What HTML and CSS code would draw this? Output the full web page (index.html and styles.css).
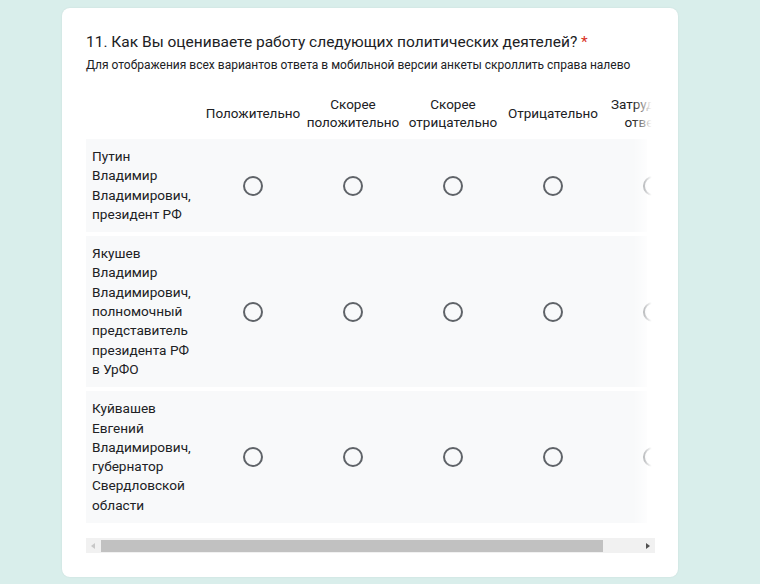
FILE: index.html
```html
<!DOCTYPE html>
<html lang="ru">
<head>
<meta charset="utf-8">
<link rel="stylesheet" href="styles.css">
</head>
<body>
<div class="card">
  <div class="title">11. Как Вы оцениваете работу следующих политических деятелей? <span class="req">*</span></div>
  <div class="subtitle">Для отображения всех вариантов ответа в мобильной версии анкеты скроллить справа налево</div>
  <div class="scroller">
    <div class="grid">
      <div class="row head">
        <div class="cell label"></div>
        <div class="cell">Положительно</div>
        <div class="cell">Скорее<br>положительно</div>
        <div class="cell">Скорее<br>отрицательно</div>
        <div class="cell">Отрицательно</div>
        <div class="cell">Затрудняюсь<br>ответить</div>
      </div>
      <div class="row body">
        <div class="cell label">Путин Владимир Владимирович, президент РФ</div>
        <div class="cell"><span class="radio"></span></div>
        <div class="cell"><span class="radio"></span></div>
        <div class="cell"><span class="radio"></span></div>
        <div class="cell"><span class="radio"></span></div>
        <div class="cell"><span class="radio"></span></div>
      </div>
      <div class="row body">
        <div class="cell label">Якушев Владимир Владимирович, полномочный представитель президента РФ в УрФО</div>
        <div class="cell"><span class="radio"></span></div>
        <div class="cell"><span class="radio"></span></div>
        <div class="cell"><span class="radio"></span></div>
        <div class="cell"><span class="radio"></span></div>
        <div class="cell"><span class="radio"></span></div>
      </div>
      <div class="row body">
        <div class="cell label">Куйвашев Евгений Владимирович, губернатор Свердловской области</div>
        <div class="cell"><span class="radio"></span></div>
        <div class="cell"><span class="radio"></span></div>
        <div class="cell"><span class="radio"></span></div>
        <div class="cell"><span class="radio"></span></div>
        <div class="cell"><span class="radio"></span></div>
      </div>
    </div>
    <div class="fade"></div>
  </div>
  <div class="scrollbar">
    <span class="arrow left"></span>
    <span class="thumb"></span>
    <span class="arrow right"></span>
  </div>
</div>
</body>
</html>
```

FILE: styles.css
```css
html, body {
  margin: 0;
  padding: 0;
}
body {
  background: #d9eeeb;
  font-family: Roboto, "Noto Sans", sans-serif;
  color: #202124;
  width: 760px;
  height: 584px;
  overflow: hidden;
}
.card {
  margin: 8px 0 0 62px;
  width: 616px;
  box-sizing: border-box;
  background: #fff;
  border-radius: 8px;
  padding: 22px 23px 24px 24px;
  box-shadow: 0 0 2px rgba(0,0,0,0.08);
}
.title {
  font-size: 15.5px;
  line-height: 24px;
  color: #202124;
}
.req {
  color: #d93025;
}
.subtitle {
  margin-top: 3px;
  font-size: 12px;
  line-height: 16px;
  color: #202124;
}
.scroller {
  position: relative;
  margin-top: 22px;
  width: 569px;
  overflow: hidden;
}
.grid {
  display: flex;
  flex-direction: column;
  gap: 4px;
  width: max-content;
}
.row {
  display: grid;
  grid-template-columns: 117px repeat(5, 100px);
  align-items: center;
}
.row.head {
  font-size: 13.5px;
  line-height: 18px;
  text-align: center;
  margin-bottom: 4px;
  min-height: 36px;
}
.row.body {
  background: #f8f9fa;
  width: 561px;
  font-size: 13.6px;
  line-height: 19.3px;
}
.cell {
  display: flex;
  justify-content: center;
  align-items: center;
}
.cell.label {
  display: block;
  padding: 8px 8px 8px 6px;
  text-align: left;
}
.radio {
  display: block;
  width: 20px;
  height: 20px;
  box-sizing: border-box;
  border: 2px solid #5f6368;
  border-radius: 50%;
}
.fade {
  position: absolute;
  top: 0;
  right: 0;
  bottom: 0;
  width: 22px;
  background: linear-gradient(to right, rgba(255,255,255,0), #fff 85%);
}
.scrollbar {
  margin-top: 15px;
  width: 569px;
  height: 15px;
  background: #f1f1f1;
  display: flex;
  align-items: center;
}
.arrow {
  width: 0;
  height: 0;
  border-top: 3.5px solid transparent;
  border-bottom: 3.5px solid transparent;
}
.arrow.left {
  margin: 0 6px 0 5px;
  border-right: 4px solid #c8c8c8;
}
.arrow.right {
  margin-left: auto;
  margin-right: 5px;
  border-left: 4px solid #505050;
}
.thumb {
  width: 502px;
  height: 12px;
  background: #c1c1c1;
}
```
